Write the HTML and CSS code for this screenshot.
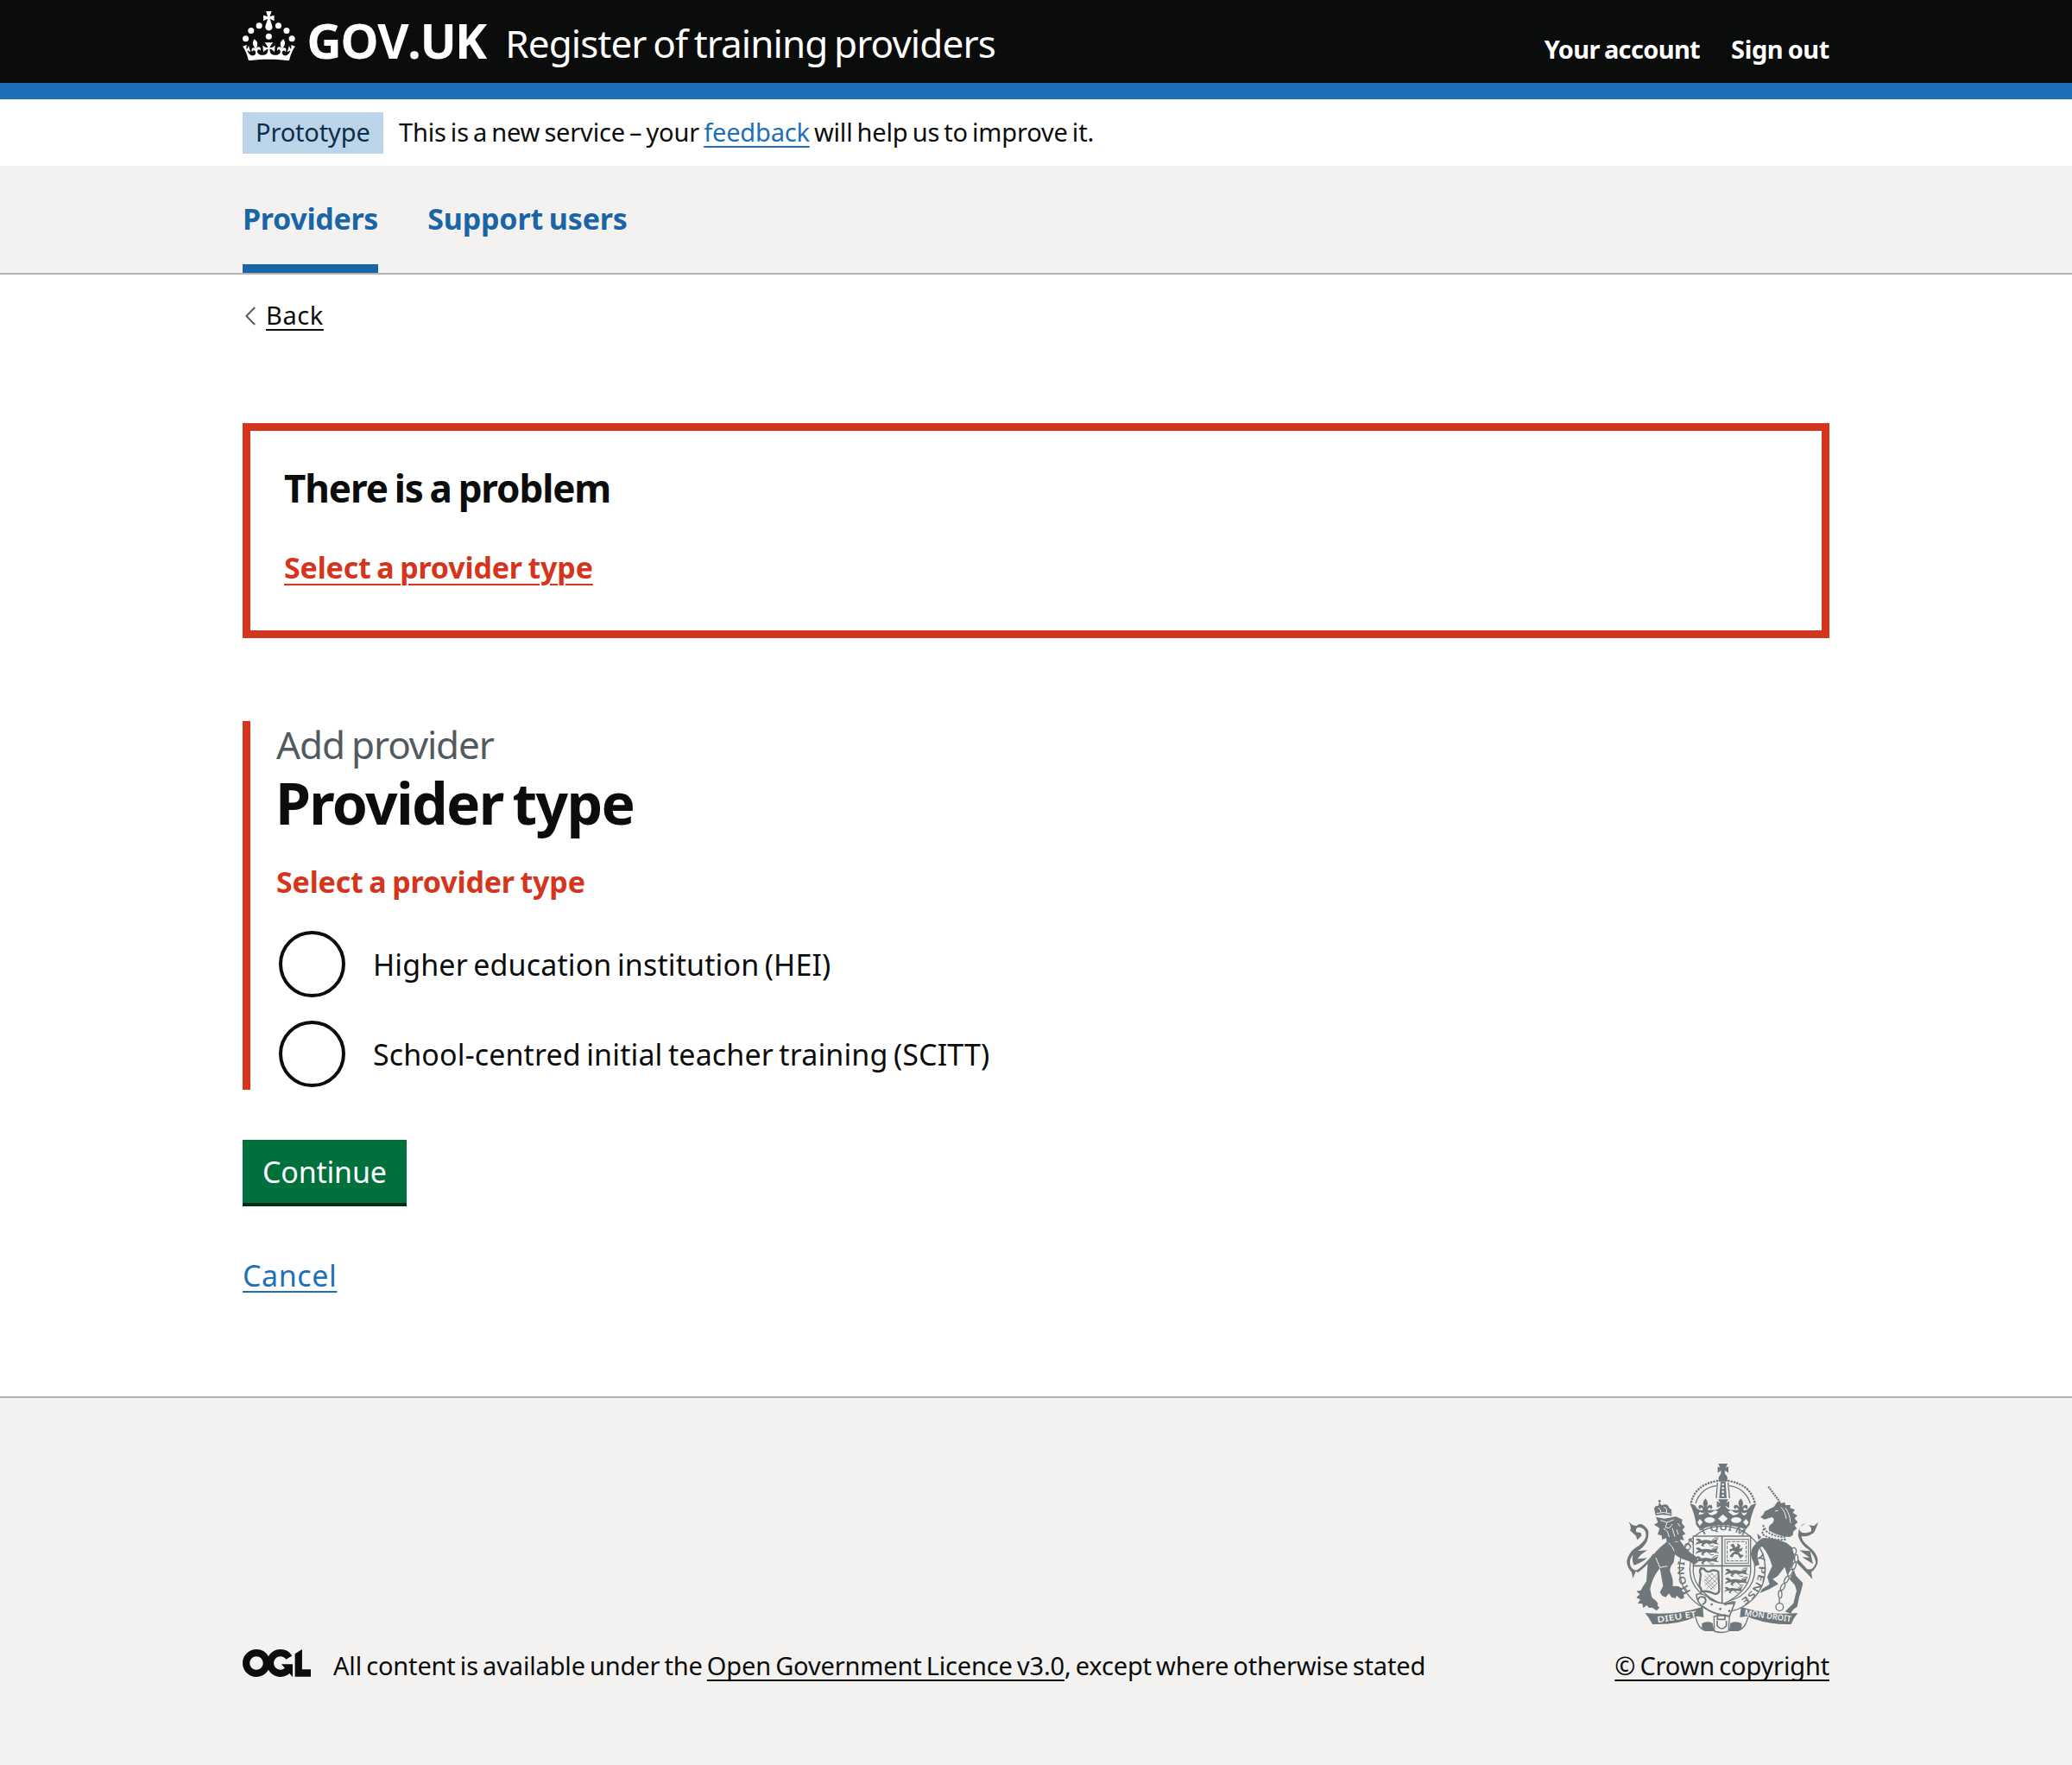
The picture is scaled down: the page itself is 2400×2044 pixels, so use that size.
FILE: index.html
```html
<!DOCTYPE html>
<html lang="en">
<head>
<meta charset="utf-8">
<title>Provider type - Register of training providers</title>
<link rel="stylesheet" href="styles.css">
</head>
<body>
<header class="header">
  <div class="container header-row">
    <svg class="crown" viewBox="0 0 64 60" aria-hidden="true">
      <g fill="#fff">
        <circle cx="20" cy="17.6" r="3.7"/><circle cx="10.2" cy="23.5" r="3.7"/><circle cx="3.7" cy="33.2" r="3.7"/><circle cx="31.7" cy="30.6" r="3.7"/><circle cx="43.3" cy="17.6" r="3.7"/><circle cx="53.2" cy="23.5" r="3.7"/><circle cx="59.7" cy="33.2" r="3.7"/>
        <path d="M33.1,9.8c.2-.1.3-.3.5-.5l4.6,2.4v-6.8l-4.6,1.5c-.1-.2-.3-.3-.5-.5l1.9-5.9h-6.7l1.9,5.9c-.2.1-.3.3-.5.5l-4.6-1.5v6.8l4.6-2.4c.1.2.3.3.5.5l-2.6,8c-.9,2.8,1.2,5.7,4.1,5.7h0c3,0,5.1-2.9,4.1-5.7l-2.6-8ZM37,37.9s-3.4,3.8-4.1,6.1c2.2,0,4.2-.5,6.4-2.8l-.7,8.5c-2-2.8-4.4-4.1-5.7-3.8.1,3.1.5,6.7,5.8,7.2,3.7.3,6.7-1.5,7-3.8.4-2.6-2-4.3-3.7-1.6-1.4-4.5,2.4-6.1,4.9-3.2-1.9-4.5-1.8-7.7,2.4-10.9,3,4,2.6,7.3-1.2,11.1,2.4-1.3,6.2,0,4,4.6-1.2-2.8-3.7-2.2-4.2.2-.3,1.7.7,3.7,3,4.2,1.9.3,4.7-.9,7-5.9-1.3,0-2.4.7-3.9,1.7l2.4-8c.6,2.3,1.4,3.7,2.2,4.5.6-1.6.5-2.8,0-5.3l5,1.8c-2.6,3.6-5.2,8.7-7.3,17.5-7.4-1.1-15.7-1.7-24.5-1.7h0c-8.8,0-17.1.6-24.5,1.7-2.1-8.9-4.7-13.9-7.3-17.5l5-1.8c-.5,2.5-.6,3.7,0,5.3.8-.8,1.6-2.3,2.2-4.5l2.4,8c-1.5-1-2.6-1.7-3.9-1.7,2.3,5,5.2,6.2,7,5.9,2.3-.4,3.3-2.4,3-4.2-.5-2.4-3-3.1-4.2-.2-2.2-4.6,1.6-6,4-4.6-3.7-3.7-4.2-7.1-1.2-11.1,4.2,3.2,4.3,6.4,2.4,10.9,2.5-2.8,6.3-1.3,4.9,3.2-1.8-2.7-4.1-1-3.7,1.6.3,2.3,3.3,4.1,7,3.8,5.4-.5,5.7-4.2,5.8-7.2-1.3-.2-3.7,1-5.7,3.8l-.7-8.5c2.2,2.3,4.2,2.7,6.4,2.8-.7-2.3-4.1-6.1-4.1-6.1h10.6Z"/>
      </g>
    </svg>
    <span class="wordmark">GOV.UK</span>
    <span class="service">Register of training providers</span>
    <nav class="account">
      <a class="account-first" href="#">Your account</a>
      <a class="account-second" href="#">Sign out</a>
    </nav>
  </div>
</header>

<div class="container phase">
  <strong class="tag">Prototype</strong>
  <span class="phase-text">This is a new service – your <a class="link" href="#">feedback</a> will help us to improve it.</span>
</div>

<nav class="service-nav">
  <div class="container nav-row">
    <a class="nav-item nav-item-active" href="#">Providers</a>
    <a class="nav-item" href="#">Support users</a>
  </div>
</nav>

<div class="container back">
  <svg class="chevron" viewBox="0 0 12 22" aria-hidden="true"><path d="M11.2 1 1.4 11l9.8 10" fill="none" stroke="#505a5f" stroke-width="1.9"/></svg>
  <a class="back-link" href="#">Back</a>
</div>

<main class="container main">
  <section class="summary">
    <h2 class="summary-title">There is a problem</h2>
    <a class="summary-link" href="#type">Select a provider type</a>
  </section>

  <form class="form">
    <div class="group" id="type">
      <div class="caption">Add provider</div>
      <h1 class="title">Provider type</h1>
      <p class="error">Select a provider type</p>
      <label class="radio"><i class="dot"></i><span>Higher education institution (HEI)</span></label>
      <label class="radio"><i class="dot"></i><span>School-centred initial teacher training (SCITT)</span></label>
    </div>
    <button class="button" type="button">Continue</button>
    <div class="cancel"><a class="cancel-link" href="#">Cancel</a></div>
  </form>
</main>

<footer class="footer">
  <div class="container footer-row">
    <div class="licence">
      <svg class="ogl" viewBox="0 0 483.2 195.7" aria-hidden="true"><path fill="#0b0c0c" d="M421.5 142.8V.1l-50.7 32.3v161.1h112.4v-50.7zm-122.3-9.6A47.12 47.12 0 0 1 221 97.8c0-26 21.1-47.1 47.1-47.1 16.7 0 31.4 8.7 39.7 21.8l42.7-27.2A97.63 97.63 0 0 0 268.1 0c-36.5 0-68.3 20.1-85.1 49.7A98 98 0 0 0 97.8 0C43.9 0 0 43.9 0 97.8s43.9 97.8 97.8 97.8c36.5 0 68.3-20.1 85.1-49.7a97.76 97.76 0 0 0 149.6 25.4l19.4 22.2h3v-87.8h-80l24.3 27.5zM97.8 145c-26 0-47.1-21.1-47.1-47.1s21.1-47.1 47.1-47.1 47.1 21.1 47.1 47.1S123.8 145 97.8 145"/></svg>
      <span class="licence-text">All content is available under the <a class="dark-link" href="#">Open Government Licence v3.0</a>, except where otherwise stated</span>
    </div>
    <div class="copyright">
      <svg class="crest" viewBox="60 40 690 600" aria-hidden="true">
        <defs>
          <path id="garter-left" d="M297 490A133 133 0 0 1 316 314"/>
          <path id="garter-top" d="M335 297A135 135 0 0 1 482 301"/>
          <path id="garter-right" d="M524 362A130 130 0 0 1 450 528"/>
          <g id="passant"><path d="M2 3Q8 -4 16 1L22 6Q36 2 50 6Q60 10 68 3L80 0Q72 9 76 15L84 20L70 18L60 16Q48 20 38 15L28 22L32 28L20 24L24 15L10 17L0 22L5 13L12 10Z"/><path d="M58 6Q68 -6 80 -3M44 16L54 25H64" fill="none" stroke="#6f777b" stroke-width="3"/></g>
          <path id="fleur" d="M0 -42Q-12 -28 -6 -16L-4 -10Q-12 -24 -22 -18Q-28 -8 -18 -5Q-17 -12 -12 -9Q-7 -5 -9 2H9Q7 -5 12 -9Q17 -12 18 -5Q28 -8 22 -18Q12 -24 4 -10L6 -16Q12 -28 0 -42Z"/>
        </defs>
        <g fill="#6f777b">
          <!-- garter -->
          <circle cx="405" cy="412" r="149" fill="#f3f2f1" stroke="#6f777b" stroke-width="4"/>
          <circle cx="405" cy="412" r="113" fill="none" stroke="#6f777b" stroke-width="4"/>
          <g class="crest-text garter-text">
            <text><textPath href="#garter-left" textLength="188" lengthAdjust="spacingAndGlyphs">HONI SOI</textPath></text>
            <text><textPath href="#garter-top" textLength="152" lengthAdjust="spacingAndGlyphs">T QUI M</textPath></text>
            <text><textPath href="#garter-right" textLength="180" lengthAdjust="spacingAndGlyphs">Y PENSE</textPath></text>
          </g>
          <!-- crown -->
          <path d="M391 46H423L417 60L426 56V78L415 70Q411 80 418 86Q426 95 421 108H393Q389 95 397 86Q402 79 400 70L389 78V56L397 60Z"/>
          <path d="M399 109H416L420 166H394Z"/>
          <circle cx="407" cy="118" r="4" fill="#f3f2f1"/><circle cx="407" cy="131" r="4" fill="#f3f2f1"/><circle cx="407" cy="144" r="4" fill="#f3f2f1"/><circle cx="407" cy="157" r="4" fill="#f3f2f1"/>
          <g fill="none" stroke="#6f777b">
            <path d="M387 106Q312 119 297 180M427 106Q502 119 517 180" stroke-width="8" stroke-dasharray="0 10.2" stroke-linecap="round"/>
            <path d="M385 123Q330 130 312 184M429 123Q484 130 502 184" stroke-width="4"/>
            <path d="M388 112L384 166M425 112L430 166" stroke-width="4"/>
          </g>
          <path d="M292 184L309 190Q316 203 327 208L340 207H374Q392 208 400 192L386 200V176L398 184L390 170H426L417 184L429 176V200L415 192Q422 208 440 207H475L487 208Q497 203 505 190L523 184Q504 224 500 258L487 274Q407 246 326 274L314 258Q310 224 292 184Z"/>
          <use href="#fleur" x="346" y="209"/><use href="#fleur" x="469" y="209"/>
          <g fill="#f3f2f1">
            <path d="M326 213Q337 220 345 214Q338 224 322 224ZM352 214Q364 222 374 211Q382 205 389 213Q383 224 364 225ZM425 213Q433 205 441 211Q450 222 463 214Q456 227 441 225ZM470 214Q482 222 490 213Q490 224 478 226Z"/>
            <ellipse cx="361" cy="242" rx="18" ry="10"/><ellipse cx="453" cy="242" rx="18" ry="10"/><path d="M407 222L424 237L407 252L390 237ZM327 238L337 249L327 262L318 250ZM487 238L497 250L488 262L477 249Z"/>
          </g>
          <!-- shield -->
          <path d="M304 298H503V424Q496 493 405 535Q312 493 304 424Z" fill="#f3f2f1" stroke="#6f777b" stroke-width="4"/>
          <path d="M404 298V532M304 401H503" fill="none" stroke="#6f777b" stroke-width="5"/>
          <use href="#passant" x="311" y="307"/><use href="#passant" x="311" y="338"/><use href="#passant" x="311" y="369"/>
          <use href="#passant" x="413" y="412"/><use href="#passant" x="413" y="443"/><use href="#passant" transform="translate(411 475) scale(.8)"/>
          <rect x="414" y="309" width="82" height="83" fill="none" stroke="#6f777b" stroke-width="3"/>
          <rect x="422" y="317" width="66" height="67" fill="none" stroke="#6f777b" stroke-width="3" stroke-dasharray="12 4"/>
          <path d="M432 328L444 324L450 336L458 334L456 322L468 330L464 342L476 338L472 350L462 352L468 362L480 364L468 376L458 362L446 360L440 372L430 368L440 356L450 350L438 348L432 354L430 344L442 340Z"/>
          <path d="M330 410Q324 420 330 430L325 472Q334 481 332 491Q350 485 380 499Q394 498 394 484L391 421Q380 415 369 417Q350 428 341 411Z" fill="none" stroke="#6f777b" stroke-width="7"/>
          <path d="M343 435L382 475M343 446L378 482M344 458L370 485M353 429L386 462M366 426L387 447M386 430L344 470M388 445L350 481M387 461L364 483M371 427L341 455" stroke="#6f777b" stroke-width="2"/>
          <!-- lion supporter -->
          <path d="M79 247Q92 263 108 262L111 258Q128 249 147 277Q151 296 143 316Q132 338 108 351Q88 364 84 384Q82 405 97 414Q104 417 111 414Q137 397 165 359L170 364Q140 405 112 424L104 420L94 445L90 424Q73 405 73 386Q78 356 104 338Q130 322 138 303Q143 284 131 273Q120 265 110 268Q102 273 106 284L122 286L124 297L109 311L105 297L84 278Q91 267 79 247Z"/>
          <path d="M100 350L144 347Q124 358 110 377L144 374Q125 390 98 399Q86 376 100 350Z"/>
          <path d="M210 319L262 318Q279 348 316 371L320 388L308 397L289 385Q260 378 240 362L236 389Q215 412 228 433Q236 456 232 471L252 472L268 481L264 488L279 497L270 502L273 512L261 517L246 505L242 514L228 510L220 497L208 510L196 505L188 493L199 471L188 409Q161 442 154 482L160 510L174 522L181 531L180 540L187 546L176 557L162 546L150 547L142 538L130 548L127 533L111 532L120 518L106 512L118 500L106 489L122 486L128 474L141 455L146 390Q169 350 210 319Z"/>
          <path d="M174 231L204 237L244 230L266 240L264 253L275 266L266 276L277 290L266 296L272 312L258 310L262 322L246 316L225 322L212 322L210 305L196 310L194 296L180 292L187 271L168 258L181 250Z"/>
          <path d="M173 226L168 202Q174 189 182 193L186 180L194 191Q215 182 220 200L228 205L229 228Q202 221 173 226Z"/>
          <path d="M181 202Q188 196 191 215M201 198Q214 196 211 217M176 219Q202 211 226 221" fill="none" stroke="#f3f2f1" stroke-width="3"/>
          <path d="M187 171V182M182 176H192" stroke="#6f777b" stroke-width="4"/>
          <path d="M190 243L212 250L236 241M213 249L207 268L221 270L231 256M200 272Q216 276 220 301M231 270L240 300M250 253L258 264M246 275L252 292" fill="none" stroke="#f3f2f1" stroke-width="3"/>
          <path d="M218 321Q233 336 238 350M174 373L188 407L214 402" fill="none" stroke="#f3f2f1" stroke-width="3"/>
          <!-- unicorn supporter -->
          <path d="M565 126L604 178" stroke="#6f777b" stroke-width="7" stroke-dasharray="6 3"/>
          <path d="M596 179L606 176L608 184L622 180L624 190L642 190L640 200L657 206L650 217L666 227L656 236L667 249L656 260L664 272L652 281L650 294L639 301Q603 299 567 279Q562 262 580 252Q589 238 578 232L551 240L537 231Q548 226 552 212L584 196Z"/>
          <path d="M588 211L599 209M608 197Q624 211 627 238M624 200Q640 222 642 252" fill="none" stroke="#f3f2f1" stroke-width="3"/>
          <path d="M546 260L558 281Q591 305 628 299M549 272L543 290Q578 316 629 309" fill="none" stroke="#6f777b" stroke-width="6" stroke-dasharray="7 4"/>
          <path d="M549 304Q591 305 628 321Q664 344 660 386Q647 409 661 436L685 461Q679 491 672 509L665 543Q649 550 643 567L623 560L652 531L663 487L657 468L632 440L622 405L597 437L580 447L600 464L570 481L535 496L544 481L569 465L561 439L578 402Q567 361 544 334Q526 337 527 374L534 397L520 402L508 377Q499 344 519 327Q535 307 549 304Z"/>
          <path d="M526 289L541 302L530 311Z"/>
          <path d="M738 249L724 262L705 260Q717 268 713 282Q687 291 678 283Q669 276 676 266L696 251Q665 264 669 299Q679 330 704 344Q726 365 730 390Q720 419 699 412L668 378L664 391L696 424L718 447L714 423Q740 403 736 377Q731 354 708 336Q681 317 680 298Q702 302 723 286Q733 269 738 249Z"/>
          <path d="M673 347L710 350L720 395L682 371L708 372Z"/>
          <g fill="none" stroke="#6f777b" stroke-width="4">
            <path d="M655 342L663 369L654 399L642 426L624 460L610 489L604 524" stroke="#f3f2f1" stroke-width="13"/>
            <ellipse cx="653" cy="350" rx="9" ry="12"/><ellipse cx="662" cy="375" rx="6" ry="13"/><ellipse cx="654" cy="401" rx="6" ry="13" transform="rotate(20 654 401)"/><ellipse cx="641" cy="425" rx="6" ry="13" transform="rotate(28 641 425)"/><ellipse cx="628" cy="449" rx="6" ry="13" transform="rotate(28 628 449)"/><ellipse cx="615" cy="474" rx="6" ry="13" transform="rotate(25 615 474)"/><ellipse cx="606" cy="500" rx="6" ry="13"/><path d="M603 513V532"/><circle cx="604" cy="544" r="13"/>
          </g>
          <!-- buckle and motto ribbon -->
          <path d="M315 501Q337 491 362 517Q397 537 447 532L430 576Q371 570 340 544Q316 529 315 501Z" fill="#f3f2f1" stroke="#6f777b" stroke-width="5"/>
          <path d="M320 520Q325 503 344 511Q353 528 336 535M412 537Q439 523 451 528" fill="none" stroke="#6f777b" stroke-width="6"/>
          <circle cx="368" cy="535" r="4"/><circle cx="398" cy="551" r="4"/><circle cx="429" cy="558" r="4"/>
          <path d="M137 565Q244 574 337 543L340 580L318 576Q250 607 162 604Q151 582 137 565ZM667 565Q561 575 470 543L466 580L490 576Q561 607 644 604Q652 582 667 565Z"/>
          <path d="M312 580Q322 620 345 626H376M494 580Q484 620 460 626H430" fill="none" stroke="#6f777b" stroke-width="4"/>
          <path d="M334 601Q352 591 371 600L376 627Q347 632 334 618ZM472 601Q452 591 433 600L428 627Q458 632 472 618Z"/>
          <path d="M376 577Q405 571 430 578L426 628Q403 637 377 628Z" fill="#f3f2f1" stroke="#6f777b" stroke-width="4"/>
          <path d="M387 592V609Q403 629 419 609V592M388 567V587H414V569" fill="none" stroke="#6f777b" stroke-width="5"/>
          <g class="crest-text motto-text">
            <text transform="translate(180 599) rotate(-9)" textLength="138" lengthAdjust="spacingAndGlyphs">DIEU ET</text>
            <text transform="translate(481 573) rotate(8)" textLength="163" lengthAdjust="spacingAndGlyphs">MON DROIT</text>
          </g>
        </g>
      </svg>
      <a class="dark-link copyright-link" href="#">© Crown copyright</a>
    </div>
  </div>
</footer>
</body>
</html>
```
FILE: styles.css
```css
* { box-sizing: border-box; }
body {
  margin: 0;
  background: #fff;
  color: #0b0c0c;
  font-family: "Noto Sans", "Open Sans", sans-serif;
  font-size: 29px;
  line-height: 48px;
}
h1, h2, p { margin: 0; }
a { color: inherit; text-decoration: none; }
span, a, strong { white-space: nowrap; }
.container { width: 1838px; margin-left: 281px; }

.header { height: 115px; background: #0b0c0c; border-bottom: 19px solid #1d70b8; color: #fff; }
.header-row { display: flex; align-items: flex-start; height: 96px; }
.crown { width: 61.3px; height: 57.4px; margin-top: 13px; flex: none; }
.wordmark { margin: 14px 0 0 13px; width: 213px; font: 700 56px/64px "Open Sans", "Noto Sans", sans-serif; letter-spacing: -1.6px; }
.service { margin: 18px 0 0 17px; font-size: 44px; line-height: 64px; letter-spacing: -0.9px; word-spacing: -3px; }
.account { display: flex; margin-left: auto; padding-top: 33px; font-size: 29px; font-weight: 700; gap: 36px; word-spacing: -1.8px; }
.account-first { letter-spacing: -0.65px; }
.account-second { letter-spacing: -0.4px; }

.phase { display: flex; align-items: flex-start; height: 77px; padding-top: 15px; gap: 18px; line-height: 46px; }
.phase-text { letter-spacing: -0.18px; word-spacing: -2.2px; }
.tag { width: 163px; height: 48px; padding-left: 15px; background: #bbd4ea; color: #0c2d4a; font-weight: 400; letter-spacing: -0.15px; }
.link { color: #1d70b8; }
.link, .back-link, .dark-link, .cancel-link {
  text-decoration: underline;
  text-decoration-thickness: 2px;
  text-underline-offset: 5px;
  text-decoration-skip-ink: none;
}

.service-nav { height: 126px; background: #f3f2f1; border-bottom: 2px solid #b1b4b6; }
.nav-row { display: flex; gap: 57px; height: 124px; word-spacing: -2px; }
.nav-item { height: 124px; padding-top: 37px; color: #1a65a6; font-size: 34px; font-weight: 700; letter-spacing: -0.15px; }
.nav-item-active { border-bottom: 10px solid #1a65a6; letter-spacing: -0.3px; }

.back { display: flex; height: 172px; padding-top: 23px; }
.back-link { height: 48px; letter-spacing: 0.6px; }
.chevron { width: 12px; height: 22px; margin: 14px 12px 0 3px; }

.summary { height: 249px; padding: 39px 39px 0; border: 9px solid #d4351c; font-weight: 700; }
.summary-title { font-size: 44px; line-height: 55px; letter-spacing: -1.1px; word-spacing: -2.5px; }
.summary-link { display: inline-block; margin-top: 40px; color: #d4351c; font-size: 34px; letter-spacing: -0.18px; word-spacing: -2px; text-decoration: underline; text-decoration-thickness: 2px; text-underline-offset: 6px; }

.group { height: 427px; margin-top: 96px; padding-left: 30px; border-left: 9px solid #d4351c; }
.caption { color: #505a5f; font-size: 44px; line-height: 55px; letter-spacing: -1.15px; word-spacing: -2px; }
.title { margin-left: -1px; font-size: 66px; line-height: 78px; font-weight: 700; letter-spacing: -1.7px; word-spacing: -4.5px; }
.error { margin: 29px 0 33px; color: #d4351c; font-size: 34px; font-weight: 700; letter-spacing: -0.18px; word-spacing: -2px; }
.radio { display: flex; align-items: center; height: 77px; margin-bottom: 27px; padding-left: 3px; font-size: 34px; letter-spacing: 0.12px; word-spacing: -2.5px; }
.dot { width: 77px; height: 77px; border: 4px solid #0b0c0c; border-radius: 50%; margin-right: 32px; }

.button { display: block; width: 190px; height: 77px; margin: 58px 0 0; padding: 0 0 0 23px; border: 0; border-bottom: 4px solid #002d18; background: #00703c; color: #fff; font: 34px/50px "Noto Sans", sans-serif; letter-spacing: -0.2px; text-align: left; }
.cancel { height: 220px; padding-top: 56px; font-size: 34px; color: #1d70b8; letter-spacing: 0.6px; }

.footer { height: 427px; background: #f3f2f1; border-top: 2px solid #b1b4b6; letter-spacing: -0.16px; word-spacing: -2.2px; }
.footer-row { display: flex; justify-content: space-between; align-items: flex-end; height: 334px; }
.licence { display: flex; align-items: center; gap: 26px; }
.ogl { width: 79px; height: 32px; margin-bottom: 6px; }
.copyright { display: flex; flex-direction: column; align-items: center; }
.crest { width: 230px; height: 200px; margin-bottom: 12px; }
.crest-text { font-family: "Noto Sans", sans-serif; font-weight: 600; letter-spacing: 0; word-spacing: 0; }
.garter-text { font-size: 32px; }
.motto-text { font-size: 29px; fill: #f3f2f1; }
```
